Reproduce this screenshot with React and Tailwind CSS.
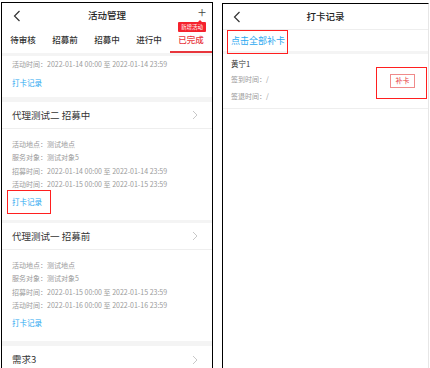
import React from 'react';

const font = { fontFamily: '"Noto Sans CJK SC", "Noto Sans", sans-serif' };

const Chevron = () => (
  <svg width="6" height="10" viewBox="0 0 6 10" className="mr-[14px]">
    <polyline points="1,1 5,5 1,9" fill="none" stroke="#c8c8c8" strokeWidth="1" />
  </svg>
);

const Back = () => (
  <svg width="8" height="12" viewBox="0 0 8 12">
    <polyline points="6.5,1 1.5,6 6.5,11" fill="none" stroke="#333" strokeWidth="1.2" />
  </svg>
);

const Line = ({ children }) => (
  <div className="h-[13.5px] flex items-center text-[7px] text-[#9a9a9a] whitespace-nowrap">{children}</div>
);

const Card = ({ title, place, target, recruit, active, boxed }) => (
  <div className="bg-white shrink-0">
    <div className="h-[27px] flex items-center justify-between pl-[10px] border-b border-[#eeeeee]">
      <span className="text-[9.5px] text-[#333]">{title}</span>
      <Chevron />
    </div>
    <div className="pl-[10px] pt-[8px] pb-[11px]">
      <Line>活动地点：{place}</Line>
      <Line>服务对象：{target}</Line>
      <Line>招募时间：{recruit}</Line>
      <Line>活动时间：{active}</Line>
      <div className="relative mt-[4px] h-[14px] flex items-center text-[7.5px] text-[#2aa8f0]">
        打卡记录
        {boxed && (
          <div className="absolute left-[-5px] top-[-5px] w-[44px] h-[24px] border-[1.5px] border-[#ff1f1f]" />
        )}
      </div>
    </div>
  </div>
);

const tabs = ['待审核', '招募前', '招募中', '进行中', '已完成'];

export default function App() {
  return (
    <div className="w-[430px] h-[368px] overflow-hidden bg-white flex" style={font}>
      {/* left phone */}
      <div className="ml-[1px] mt-[2px] w-[212px] shrink-0 border-l border-t border-r border-black flex flex-col bg-[#f4f4f4]">
        <div className="bg-white relative h-[25px] shrink-0 flex items-center justify-center">
          <div className="absolute left-[11px] top-[7px]"><Back /></div>
          <span className="text-[9.5px] font-medium text-[#222]">活动管理</span>
          <span className="absolute right-[6px] top-[1px] text-[15px] font-light leading-none text-[#444]">+</span>
          <div className="absolute right-[6px] top-[19px] z-10 h-[10px] px-[3px] bg-[#f5222d] text-white text-[5.5px] flex items-center rounded-[1px]">
            新增活动
            <div className="absolute right-[4px] top-[-2px] w-0 h-0 border-l-[2px] border-r-[2px] border-b-[2px] border-l-transparent border-r-transparent border-b-[#f5222d]" />
          </div>
        </div>
        <div className="bg-white h-[25px] shrink-0 flex">
          {tabs.map((t, i) => (
            <div
              key={t}
              className={`flex-1 flex items-center justify-center text-[8.5px] font-medium ${i === 4 ? 'text-[#e8363c] border-b-2 border-[#e8363c]' : 'text-[#333] border-b-2 border-transparent'}`}
            >
              {t}
            </div>
          ))}
        </div>
        <div className="h-[3px] shrink-0" />
        <div className="bg-white shrink-0 pl-[10px] pt-[2px] pb-[3px]">
          <div className="h-[13px] flex items-center text-[7px] text-[#9a9a9a] whitespace-nowrap">活动时间：2022-01-14 00:00 至 2022-01-14 23:59</div>
          <div className="mt-[5px] h-[14px] flex items-center text-[7.5px] text-[#2aa8f0]">打卡记录</div>
          <div className="h-[4px]" />
        </div>
        <div className="h-[5px] shrink-0" />
        <Card
          title="代理测试二 招募中"
          place="测试地点"
          target="测试对象5"
          recruit="2022-01-14 00:00 至 2022-01-14 23:59"
          active="2022-01-15 00:00 至 2022-01-15 23:59"
          boxed
        />
        <div className="h-[3px] shrink-0" />
        <Card
          title="代理测试一 招募前"
          place="测试地点"
          target="测试对象5"
          recruit="2022-01-15 00:00 至 2022-01-15 23:59"
          active="2022-01-16 00:00 至 2022-01-16 23:59"
        />
        <div className="h-[5px] shrink-0" />
        <div className="bg-white shrink-0 h-[27px] flex items-center justify-between pl-[10px]">
          <span className="text-[9.5px] text-[#333]">需求3</span>
          <Chevron />
        </div>
      </div>

      {/* right phone */}
      <div className="ml-[9px] mt-[3px] w-[207px] shrink-0 border-l border-t border-black border-r border-r-[#e6e6e6] flex flex-col">
        <div className="relative h-[26px] shrink-0 flex items-center justify-center border-b border-[#eeeeee]">
          <div className="absolute left-[10px] top-[7px]"><Back /></div>
          <span className="text-[9.5px] font-medium text-[#222]">打卡记录</span>
        </div>
        <div className="relative h-[24px] shrink-0 flex items-center pl-[8px] border-b-[3px] border-[#f4f4f4]">
          <span className="text-[9px] text-[#2aa8f0]">点击全部补卡</span>
          <div className="absolute left-[4px] top-[0px] w-[61px] h-[24px] border-[1.5px] border-[#ff1f1f]" />
        </div>
        <div className="relative shrink-0 flex items-center justify-between pl-[8px] pt-[2px] pb-[3px] border-b border-[#eeeeee]">
          <div className="flex flex-col">
            <div className="h-[15px] flex items-center text-[7.5px] text-[#333]">黄宁1</div>
            <div className="h-[17px] flex items-center text-[7px] text-[#9a9a9a]">签到时间：/</div>
            <div className="h-[17px] flex items-center text-[7px] text-[#9a9a9a]">签退时间：/</div>
          </div>
          <div className="mr-[13px] h-[14px] w-[25px] flex items-center justify-center border border-[#f08a8a] text-[7px] text-[#e8363c]">补卡</div>
          <div className="absolute right-[1px] top-[13px] w-[51px] h-[32px] border-[1.5px] border-[#ff1f1f]" />
        </div>
      </div>
    </div>
  );
}
